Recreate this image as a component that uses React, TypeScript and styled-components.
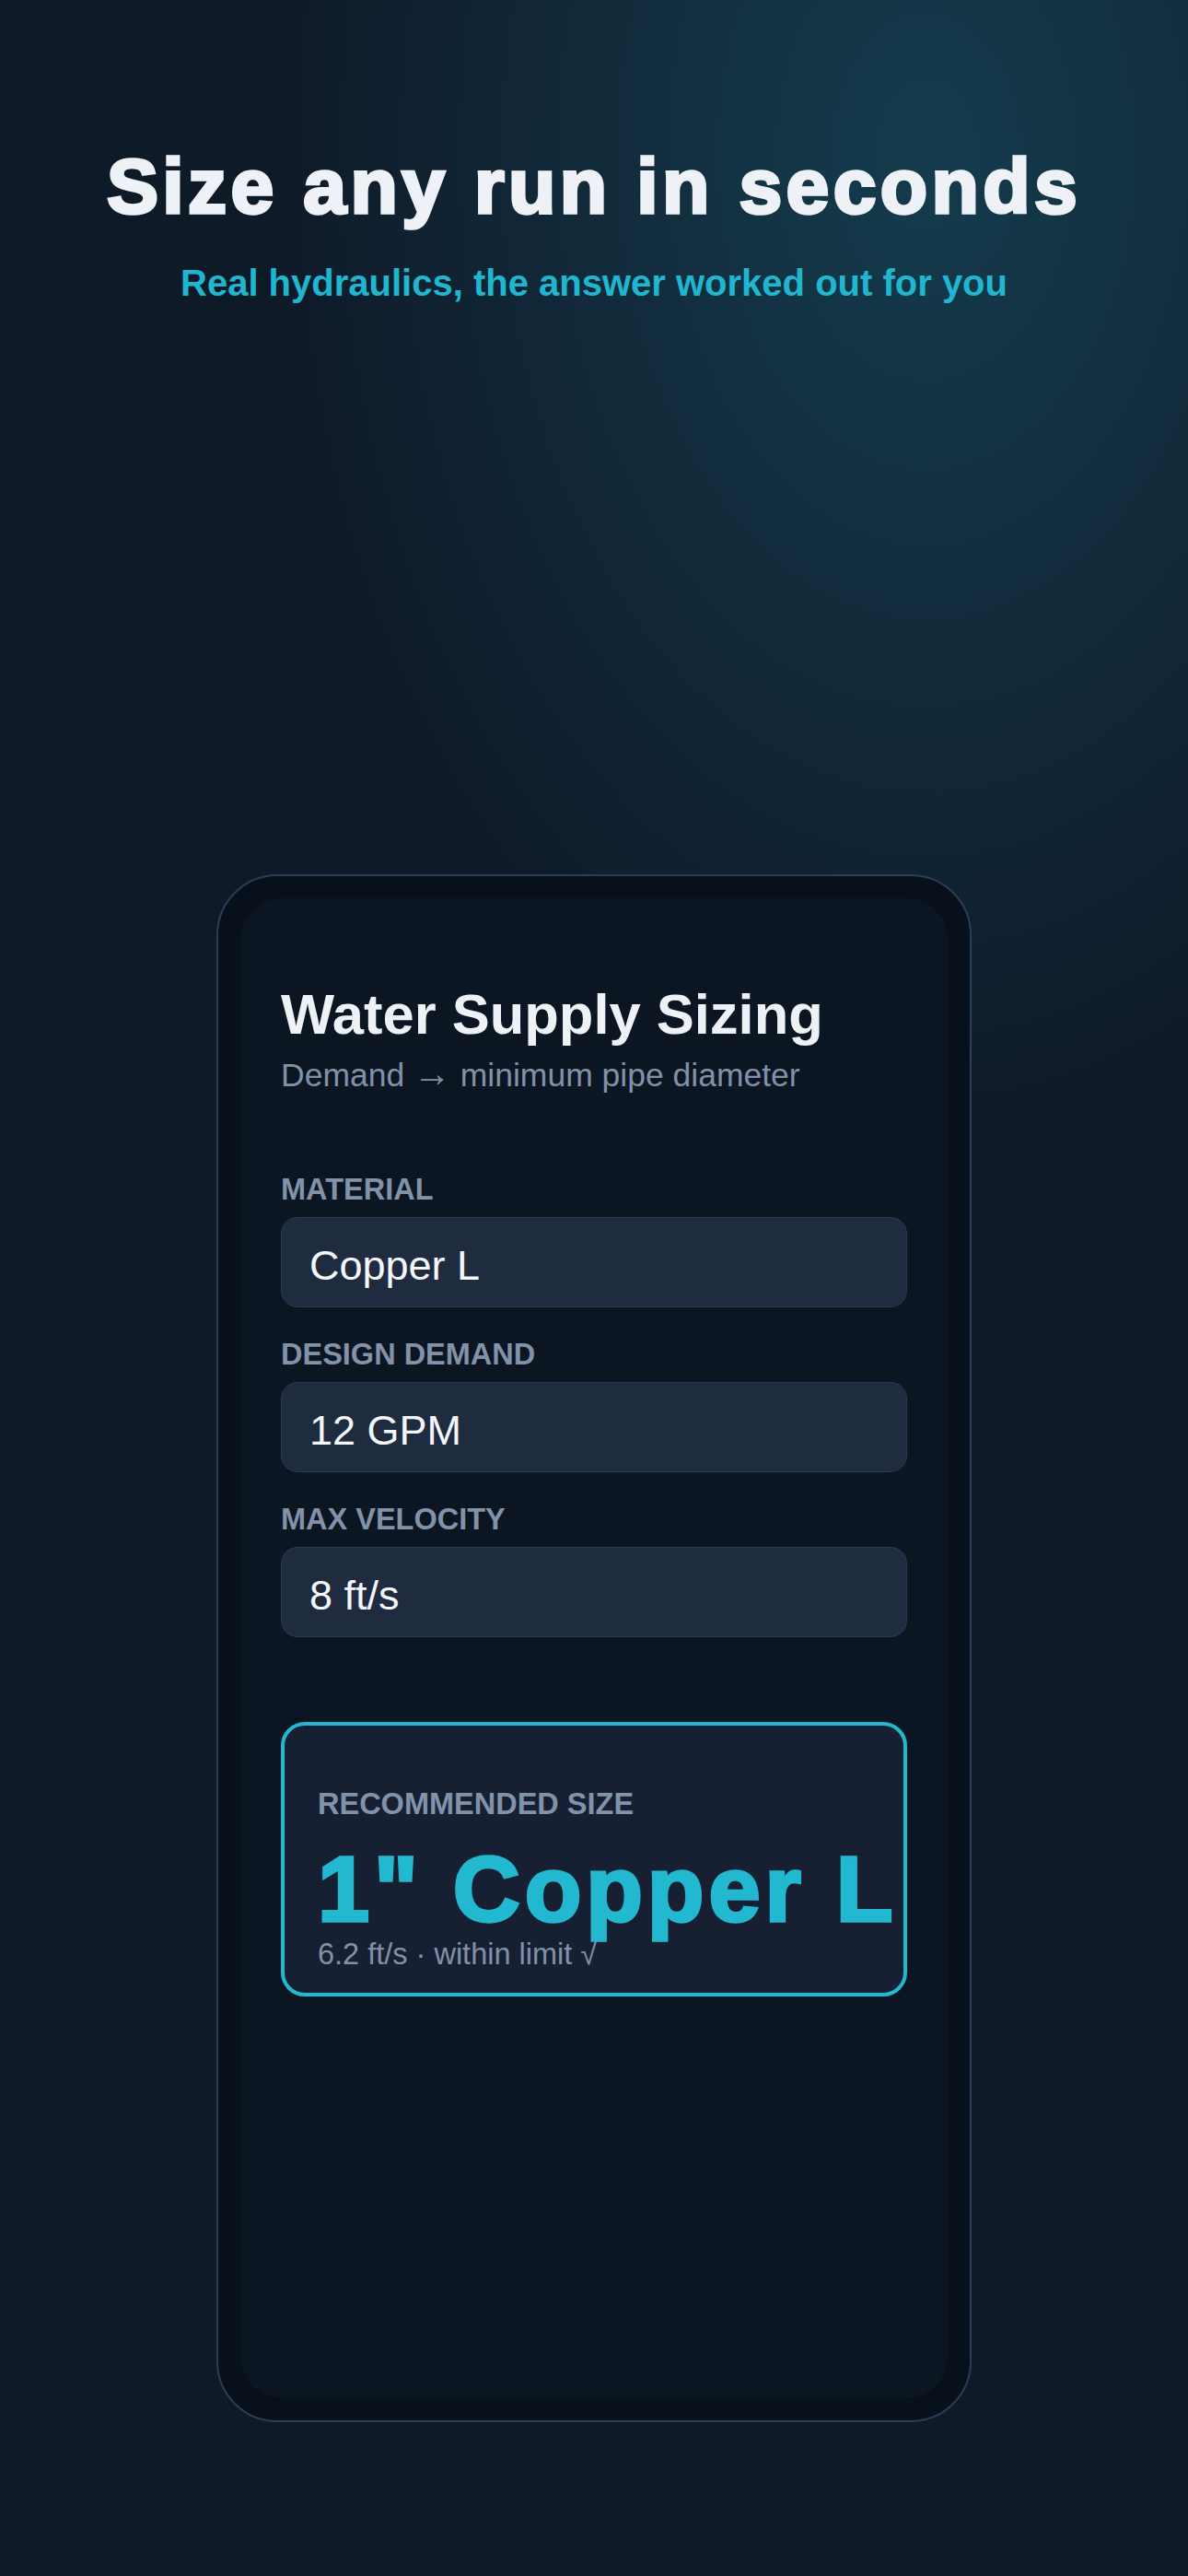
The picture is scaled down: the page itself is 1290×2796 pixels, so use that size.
import styled, { createGlobalStyle } from "styled-components";

const GlobalStyle = createGlobalStyle`
  html, body {
    margin: 0;
    padding: 0;
    background: #0f1a29;
  }

  * {
    box-sizing: border-box;
  }
`;

const Page = styled.div`
  min-height: 2796px;
  display: flex;
  flex-direction: column;
  align-items: center;
  padding-top: 157px;
  font-family: "Liberation Sans", Arial, sans-serif;
  background:
    radial-gradient(
      ellipse 1000px 1500px at 78% 6%,
      rgba(21, 66, 84, 0.85) 0%,
      rgba(15, 27, 42, 0) 70%
    ),
    #0f1a29;
`;

// heavy display text: bold face thickened with a stroke of its own colour
const Headline = styled.h1`
  margin: 0;
  font-size: 84px;
  line-height: 91px;
  font-weight: 700;
  letter-spacing: 4.4px;
  color: #eef2f7;
  -webkit-text-stroke: 3.5px #eef2f7;
  text-align: center;
`;

const Tagline = styled.p`
  margin: 35px 0 0;
  font-size: 40px;
  line-height: 48px;
  font-weight: 700;
  color: #21b6cf;
  text-align: center;
`;

const Phone = styled.div`
  margin-top: 618px;
  width: 820px;
  height: 1680px;
  padding: 24px;
  border: 2px solid #2c3d56;
  border-radius: 66px;
  background: #07101b;
`;

const Screen = styled.div`
  height: 100%;
  border-radius: 44px;
  background: #0c1622;
  padding: 89px 44px 0;
  display: flex;
  flex-direction: column;
`;

const ScreenTitle = styled.h2`
  margin: 0;
  font-size: 61.5px;
  line-height: 73px;
  font-weight: 700;
  color: #eef2f7;
`;

const ScreenSub = styled.p`
  margin: 10px 0 0;
  font-size: 35.5px;
  line-height: 41px;
  color: #8191a8;
`;

const Arrow = styled.span`
  font-size: 1.15em;
  line-height: 0;
`;

const Form = styled.div`
  margin-top: 84px;
  display: flex;
  flex-direction: column;
  gap: 32px;
`;

const FieldGroup = styled.div`
  display: flex;
  flex-direction: column;
  gap: 11px;
`;

const SmallCaps = styled.span`
  display: block;
  font-size: 32.5px;
  line-height: 38px;
  font-weight: 700;
  color: #8192a9;
  text-transform: uppercase;
`;

const FieldBox = styled.div`
  height: 98px;
  padding: 8px 30px 0;
  display: flex;
  align-items: center;
  border: 1px solid #2a3a52;
  border-radius: 18px;
  background: #1f2c40;
  font-size: 45px;
  color: #f3f6fa;
`;

const ResultCard = styled.div`
  margin-top: 92px;
  padding: 66px 36px 23px;
  border: 4px solid #22b8d0;
  border-radius: 26px;
  background: #172033;
`;

const ResultValue = styled.div`
  margin-top: 23px;
  font-size: 101px;
  line-height: 101px;
  font-weight: 700;
  letter-spacing: 4.9px;
  color: #22b8d0;
  -webkit-text-stroke: 3.5px #22b8d0;
  white-space: nowrap;
`;

const ResultNote = styled.p`
  margin: 1px 0 0;
  font-size: 32.5px;
  line-height: 38px;
  color: #8191a8;
`;

const fields = [
  { label: "Material", value: "Copper L" },
  { label: "Design demand", value: "12 GPM" },
  { label: "Max velocity", value: "8 ft/s" },
];

export default function App() {
  return (
    <>
      <GlobalStyle />
      <Page>
        <Headline>Size any run in seconds</Headline>
        <Tagline>Real hydraulics, the answer worked out for you</Tagline>
        <Phone>
          <Screen>
            <ScreenTitle>Water Supply Sizing</ScreenTitle>
            <ScreenSub>
              Demand <Arrow>→</Arrow> minimum pipe diameter
            </ScreenSub>
            <Form>
              {fields.map((f) => (
                <FieldGroup key={f.label}>
                  <SmallCaps>{f.label}</SmallCaps>
                  <FieldBox>{f.value}</FieldBox>
                </FieldGroup>
              ))}
            </Form>
            <ResultCard>
              <SmallCaps>Recommended size</SmallCaps>
              <ResultValue>1" Copper L</ResultValue>
              <ResultNote>6.2 ft/s · within limit √</ResultNote>
            </ResultCard>
          </Screen>
        </Phone>
      </Page>
    </>
  );
}
